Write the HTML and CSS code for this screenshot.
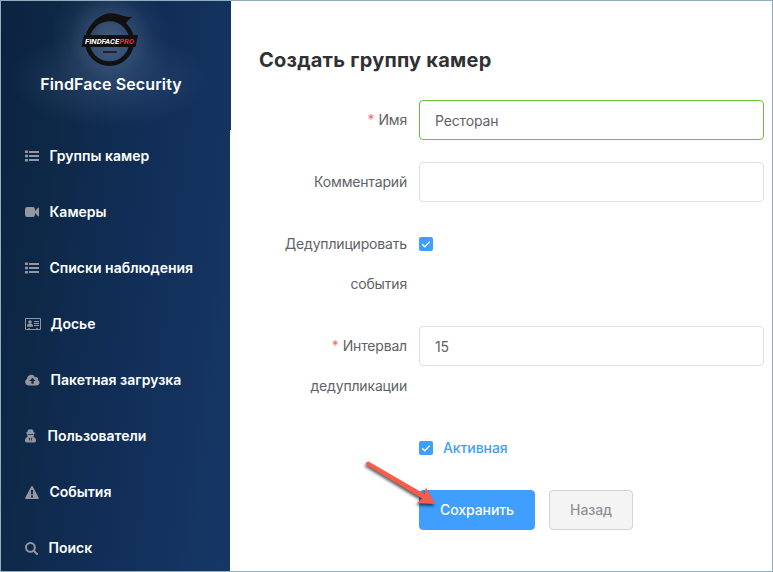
FILE: index.html
```html
<!DOCTYPE html>
<html lang="ru">
<head>
<meta charset="utf-8">
<title>FindFace Security</title>
<link rel="stylesheet" href="styles.css">
</head>
<body>
<div class="app">
  <aside class="sidebar">
    <header class="brand">
      <svg class="logo" width="58" height="56" viewBox="0 0 58 56">
        <circle cx="28.500" cy="29.300" r="22.300" fill="none" stroke="#111" stroke-width="4.600"/>
        <path d="M7 20C11 7 22 .8 31 1.200c7 .3 13 4.300 20.500 3.800-3 1.500-5 3.500-6.500 6.500C34 6 18 8 7 20z" fill="#111"/>
        <path d="M3 23h54L54.500 35H.5z" fill="#111"/>
        <path d="M22 40h14" stroke="#222130" stroke-width="2"/>
        <text class="logo-text" x="4" y="31.800" textLength="49" lengthAdjust="spacingAndGlyphs" fill="#fff">FINDFACE<tspan fill="#f02a40">PRO</tspan></text>
      </svg>
      <div class="brand-name">FindFace Security</div>
    </header>
    <nav class="menu">
      <a class="item"><svg width="14" height="12" viewBox="0 0 14 12"><path d="M0 .5h3v2.500H0zM4 1h10v2H4zM0 4.700h3v2.500H0zM4 5h10v2H4zM0 9h3v2.500H0zM4 9h10v2H4z"/></svg><span>Группы камер</span></a>
      <a class="item"><svg width="14" height="12" viewBox="0 0 14 12"><path d="M2.300 1h5.400Q10 1 10 3.300V5l3.300-3.400q.7-.4.7.4v8q0 .8-.7.4L10 7v1.700Q10 11 7.700 11H2.300Q0 11 0 8.700V3.300Q0 1 2.300 1z"/></svg><span>Камеры</span></a>
      <a class="item"><svg width="14" height="12" viewBox="0 0 14 12"><path d="M0 .5h3v2.500H0zM4 1h10v2H4zM0 4.700h3v2.500H0zM4 5h10v2H4zM0 9h3v2.500H0zM4 9h10v2H4z"/></svg><span>Списки наблюдения</span></a>
      <a class="item id"><svg width="16" height="12" viewBox="0 0 16 12"><path fill-rule="evenodd" d="M1 0h14q1 0 1 1v10q0 1-1 1H1q-1 0-1-1V1q0-1 1-1zm0 1v10h2v-.7h2V11h6v-.7h2V11h2V1z"/><circle cx="5" cy="4" r="1.800"/><path d="M2 8.700q0-3 1.700-3h2.600q1.700 0 1.700 3zM9 3h5v1H9zM9 5h5v1H9zM9 7h5v1H9z"/></svg><span>Досье</span></a>
      <a class="item"><svg width="15" height="12" viewBox="0 0 15 12"><path fill-rule="evenodd" d="M3.500 11.500A3.500 3.500 0 0 1 2 4.900 4.200 4.200 0 0 1 10 3.300a2.200 2.200 0 0 1 3 2.900 2.800 2.800 0 0 1-1.200 5.300zM7.500 3.700L4.400 7h2v2.700h2.200V7h2z"/></svg><span>Пакетная загрузка</span></a>
      <a class="item user"><svg width="11" height="14" viewBox="0 0 11 14"><path fill-rule="evenodd" d="M3 1q1-1.200 2.500-.6Q7 -.2 8 1l.6 2 1.600.9-1.400 1v2L8.400 8Q11 8.500 11 11.800q0 1.700-1.500 1.700h-8Q0 13.500 0 11.800 0 8.500 2.600 8l-.4-1.100v-2L.8 3.900 2.400 3zM3 5v.8h5V5zM3.700 8.600l.8 3.800.6-3zM7.300 8.600L5.900 9.400l.6 3z"/></svg><span>Пользователи</span></a>
      <a class="item"><svg width="14" height="13" viewBox="0 0 14 13"><path fill-rule="evenodd" d="M6.200.5q.8-1 1.600 0L13.900 12q.2 1-.8 1H.9q-1 0-.8-1zM5.900 4l.3 4.500h1.600L8.100 4zM6 9.500v1.900h2V9.500z"/></svg><span>События</span></a>
      <a class="item"><svg width="13" height="13" viewBox="0 0 13 13"><circle cx="5.400" cy="5.400" r="4.400" fill="none" stroke="#9496a0" stroke-width="2"/><path d="M8.700 8.700l3.300 3.300" stroke="#9496a0" stroke-width="2" stroke-linecap="round"/></svg><span>Поиск</span></a>
    </nav>
  </aside>
  <main class="content">
    <h1>Создать группу камер</h1>
    <form class="form">
      <div class="row"><label class="required">Имя</label><div class="input valid">Ресторан</div></div>
      <div class="row"><label>Комментарий</label><div class="input"></div></div>
      <div class="row"><label>Дедуплицировать события</label><div class="check"><svg class="box" viewBox="0 0 14 14"><path d="M3.200 7.200l2.600 2.600 5-5.200"/></svg></div></div>
      <div class="row"><label class="required">Интервал дедупликации</label><div class="input">15</div></div>
      <div class="row"><label></label><div class="check"><svg class="box" viewBox="0 0 14 14"><path d="M3.200 7.200l2.600 2.600 5-5.200"/></svg><span>Активная</span></div></div>
      <div class="row"><label></label><div class="actions"><button type="button" class="primary">Сохранить</button><button type="button">Назад</button></div></div>
    </form>
  </main>
  <svg class="pointer" width="84" height="60" viewBox="0 0 84 60"><path d="M8.300 11.800L64 45.500 59 50.200 77.500 51 67.800 34.500 66.500 41 10.500 8.500Q7 9 8.300 11.800z"/></svg>
</div>
</body>
</html>
```
FILE: styles.css
```css
* { box-sizing: border-box; }
body { margin: 0; font-family: Inter, "Liberation Sans", sans-serif; }
.app {
  position: relative;
  display: flex;
  width: 773px;
  height: 572px;
  overflow: hidden;
  border: 1px solid #8eafbb;
  background: #fff;
}
.sidebar {
  flex: none;
  width: 229px;
  background: linear-gradient(97deg, #0c2340 0%, #0e2949 28%, #102d55 50%, #163766 100%);
  color: #fff;
}
.brand {
  display: flex;
  flex-direction: column;
  align-items: center;
  height: 129px;
  padding: 11px 9px 0 0;
  box-shadow: 1px 0 #153563;
  background:
    radial-gradient(circle at 109px 37px, rgba(170, 185, 215, .34) 0, rgba(150, 170, 205, .22) 22px, rgba(120, 145, 185, .07) 42px, rgba(110, 140, 180, 0) 60px),
    radial-gradient(100px 48px at 109px 78px, rgba(110, 140, 180, .2) 0, rgba(110, 140, 180, .12) 50%, rgba(110, 140, 180, 0) 100%);
}
.logo { flex: none; margin-right: 3px; }
.logo-text { font: italic 700 8px Roboto, sans-serif; }
.brand-name {
  margin-top: 5px;
  font-size: 16px;
  font-weight: 600;
  line-height: 22px;
  letter-spacing: .12px;
  white-space: nowrap;
}
.menu { margin-top: -2px; }
.item {
  display: flex;
  align-items: center;
  gap: 10.500px;
  height: 56px;
  padding-left: 24px;
  font-size: 14px;
  font-weight: 600;
  white-space: nowrap;
}
.item.id { gap: 9.500px; }
.item.user { gap: 11.500px; }
.item svg { flex: none; fill: #9496a0; }
.item span { margin-top: -2px; letter-spacing: 0; }
.content { flex: 1; padding: 44px 8px 0 29px; }
h1 {
  margin: 0 0 25px;
  color: #303133;
  font-size: 20px;
  font-weight: 700;
  line-height: 30px;
  letter-spacing: .24px;
  white-space: nowrap;
}
.form { display: flex; flex-direction: column; gap: 22px; }
.row { display: flex; align-items: flex-start; }
label {
  flex: none;
  width: 160px;
  padding-right: 12px;
  color: #606266;
  font-size: 14px;
  line-height: 40px;
  letter-spacing: -.17px;
  text-align: right;
}
.required::before { content: "*"; margin-right: 4px; color: #f56c6c; }
.input {
  flex: 1;
  height: 40px;
  padding: 1px 15px 0;
  border: 1px solid #dcdfe6;
  border-radius: 4px;
  color: #606266;
  font-size: 14px;
  line-height: 38px;
  letter-spacing: -.15px;
}
.valid { border-color: #67c23a; }
.check {
  display: flex;
  align-items: center;
  gap: 10px;
  height: 40px;
  color: #409eff;
  font-size: 14px;
  font-weight: 500;
  letter-spacing: -.08px;
}
.check span { margin-top: -2px; }
.box { width: 14px; height: 14px; border-radius: 2px; background: #409eff; }
.box path { fill: none; stroke: #fff; stroke-width: 1.300; }
.actions { display: flex; gap: 14px; }
button {
  width: 84px;
  height: 40px;
  padding: 0 0 2px;
  border: 1px solid #d3d4d6;
  border-radius: 4px;
  background: #f4f4f5;
  color: #909399;
  font: 500 14px Inter, sans-serif;
  letter-spacing: -.08px;
}
.primary { width: 116px; border-color: #409eff; background: #409eff; color: #fff; }
.pointer {
  position: absolute;
  left: 357px;
  top: 452px;
  fill: #fa5b4b;
  filter: drop-shadow(-1px 2px 1.500px rgba(0, 0, 0, .65));
}
```
